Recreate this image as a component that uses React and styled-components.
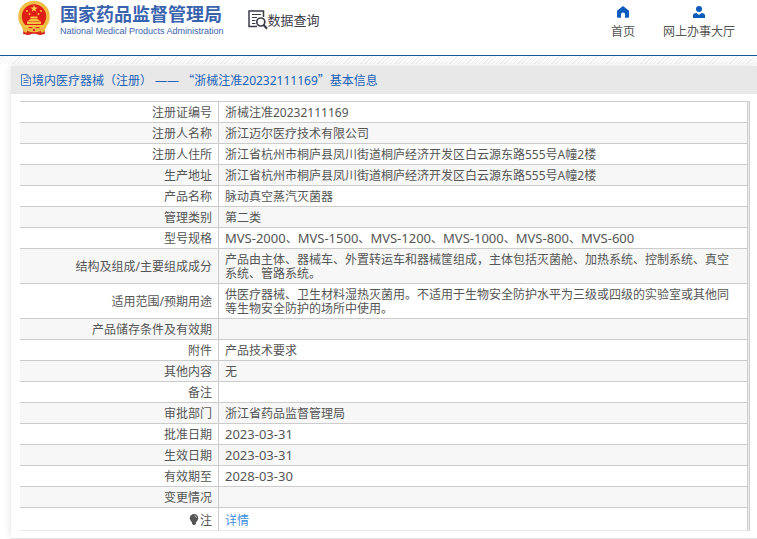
import React from 'react';
import styled, { createGlobalStyle } from 'styled-components';

const rows = [
    { label: '注册证编号', value: '浙械注准20232111169' },
    { label: '注册人名称', value: '浙江迈尔医疗技术有限公司' },
    { label: '注册人住所', value: '浙江省杭州市桐庐县凤川街道桐庐经济开发区白云源东路555号A幢2楼' },
    { label: '生产地址', value: '浙江省杭州市桐庐县凤川街道桐庐经济开发区白云源东路555号A幢2楼' },
    { label: '产品名称', value: '脉动真空蒸汽灭菌器' },
    { label: '管理类别', value: '第二类' },
    { label: '型号规格', codes: ['MVS-2000', 'MVS-1500', 'MVS-1200', 'MVS-1000', 'MVS-800', 'MVS-600'] },
    { label: '结构及组成/主要组成成分', value: '产品由主体、器械车、外置转运车和器械筐组成，主体包括灭菌舱、加热系统、控制系统、真空系统、管路系统。' },
    { label: '适用范围/预期用途', value: '供医疗器械、卫生材料湿热灭菌用。不适用于生物安全防护水平为三级或四级的实验室或其他同等生物安全防护的场所中使用。' },
    { label: '产品储存条件及有效期', value: '' },
    { label: '附件', value: '产品技术要求' },
    { label: '其他内容', value: '无' },
    { label: '备注', value: '' },
    { label: '审批部门', value: '浙江省药品监督管理局' },
    { label: '批准日期', codes: ['2023-03-31'] },
    { label: '生效日期', codes: ['2023-03-31'] },
    { label: '有效期至', codes: ['2028-03-30'] },
    { label: '变更情况', value: '' },
];

export default function App() {
    return (
        <>
            <GlobalStyle />
            <Header>
                <Brand>
                    <Emblem />
                    <BrandText>
                        <BrandName>国家药品监督管理局</BrandName>
                        <BrandSub>National Medical Products Administration</BrandSub>
                    </BrandText>
                </Brand>
                <Section>
                    <SearchDocIcon />
                    数据查询
                </Section>
                <Nav>
                    <NavLink href="#home">
                        <HomeIcon />
                        首页
                    </NavLink>
                    <NavLink href="#service">
                        <UserIcon />
                        网上办事大厅
                    </NavLink>
                </Nav>
            </Header>
            <Main>
                <Panel>
                    <PanelTitle>
                        <DocIcon />
                        <span>
                            境内医疗器械（注册） —— <Quote>“</Quote>浙械注准20232111169<Quote>”</Quote>基本信息
                        </span>
                    </PanelTitle>
                    <TableWrap>
                        <Table>
                            <tbody>
                                {rows.map((row) => (
                                    <Row key={row.label}>
                                        <Label scope="row">{row.label}</Label>
                                        <Value>{row.codes ? <Codes items={row.codes} /> : row.value}</Value>
                                    </Row>
                                ))}
                                <Row $last>
                                    <Label scope="row"><BulbIcon />注</Label>
                                    <Value><DetailLink href="#detail">详情</DetailLink></Value>
                                </Row>
                            </tbody>
                        </Table>
                    </TableWrap>
                </Panel>
            </Main>
        </>
    );
}

function Codes({ items }) {
    return items.map((item, i) => (
        <React.Fragment key={item}>
            {i > 0 && '、'}
            <Code>{item}</Code>
        </React.Fragment>
    ));
}

function Emblem() {
    return (
        <svg width="34" height="36" viewBox="0 0 34 36" aria-hidden="true">
            <path d="M7 26h20l1 8-6 1-5-2-5 2-6-1z" fill="#d8281c" />
            <circle cx="17" cy="16.500" r="14" fill="#df1f16" stroke="#f0bd45" strokeWidth="3.600" />
            <path d="M17 5l1 2.600h2.700l-2.200 1.600.9 2.600-2.400-1.600-2.400 1.600.9-2.600-2.200-1.600H16z" fill="#ffd44d" />
            <g fill="#f9c440">
                <circle cx="10" cy="11" r="1" />
                <circle cx="12.500" cy="14" r="1" />
                <circle cx="21.500" cy="14" r="1" />
                <circle cx="24" cy="11" r="1" />
                <path d="M13 18l1-1.500h6l1 1.500zM13.500 18.500h7V20h-7zM11 21l1.500-1.500h9L23 21zM10 21.500h14V24H10zM7 25h20v2H7z" />
            </g>
            <path d="M4 25c3 3 7 4 9 4l-2 4-4-1zM30 25c-3 3-7 4-9 4l2 4 4-1z" fill="#edb93f" />
            <circle cx="17" cy="30" r="3" fill="#f0bd45" />
            <circle cx="17" cy="30" r="1.200" fill="#d8281c" />
            <path d="M11 31l-1 4M23 31l1 4M14 33h6" stroke="#d8281c" strokeWidth="1.500" />
        </svg>
    );
}

function SearchDocIcon() {
    return (
        <svg width="20" height="20" viewBox="0 0 20 20" fill="none" stroke="#3d3d49" aria-hidden="true">
            <path d="M15.500 7V1H1v15.500h8" strokeWidth="1.500" />
            <path d="M4 4.500h9M4 7.500h5M4 10.500h3.500M4 13.500h3.500" strokeWidth="1.100" />
            <circle cx="12.800" cy="12" r="4" strokeWidth="1.700" />
            <path d="M15.700 15l3.300 3.800" strokeWidth="2.200" />
        </svg>
    );
}

function HomeIcon() {
    return (
        <svg width="14" height="12" viewBox="0 0 14 12" fill="#0d5bbd" aria-hidden="true">
            <path d="M7 0l6 4.800V11a.8.8 0 0 1-.8.800H9V8.500a2 2 0 0 0-4 0v3.300H1.800A.8.8 0 0 1 1 11V4.800z" />
        </svg>
    );
}

function UserIcon() {
    return (
        <svg width="14" height="12" viewBox="0 0 14 12" fill="#0d5bbd" aria-hidden="true">
            <circle cx="7" cy="3" r="3" />
            <path d="M1 12V9.500C1 7.800 2.600 7 4.500 7L7 9l2.500-2c1.900 0 3.500.8 3.500 2.500V12z" />
        </svg>
    );
}

function DocIcon() {
    return (
        <svg width="10" height="12" viewBox="0 0 10 12" fill="none" stroke="#4a7fc4" aria-hidden="true">
            <path d="M.5.5h5.500l3.500 3.500v7.500h-9zM6 .5V4h3.500M2.500 4.500h2M2.500 6.500h5M2.500 8.500h5" />
        </svg>
    );
}

function BulbIcon() {
    return (
        <svg width="10" height="11" viewBox="0 0 10 11" aria-hidden="true">
            <circle cx="5" cy="4.300" r="4.200" fill="#555" />
            <path d="M3 7.500h4v2L5.800 11H4.200L3 9.500z" fill="#555" />
            <path d="M5.500 1.800c1.200.2 1.900.9 2.100 2" stroke="#ddd" fill="none" strokeWidth=".8" />
        </svg>
    );
}

const GlobalStyle = createGlobalStyle`
  body {
    margin: 0;
    background-color: #fff;
    color: #555;
    font-family: "Noto Sans", "Noto Sans CJK SC", sans-serif;
    font-size: 12px;
    line-height: 14px;
  }
`;

const Header = styled.header`
  display: flex;
  align-items: flex-start;
  box-sizing: border-box;
  height: 56px;
  padding: 0 22px 0 17px;
  border-bottom: 1px solid #14589c;
  background-color: #fff;
`;

const Brand = styled.div`
  display: flex;
  gap: 9px;
`;

const BrandText = styled.div`
  display: flex;
  flex-direction: column;
  padding-top: 4px;
  color: #3a63ae;
  white-space: nowrap;
`;

const BrandName = styled.span`
  font-size: 18px;
  font-weight: 700;
  line-height: 21px;
`;

const BrandSub = styled.span`
  font-family: "Liberation Sans", sans-serif;
  font-size: 9px;
  line-height: 13px;
`;

const Section = styled.div`
  display: flex;
  align-items: center;
  margin-left: 24px;
  padding-top: 10px;
  color: #3d3d49;
  font-size: 13px;
  line-height: 18px;
  white-space: nowrap;
`;

const Nav = styled.nav`
  display: flex;
  gap: 28px;
  margin-left: auto;
  padding-top: 6px;
`;

const NavLink = styled.a`
  display: flex;
  flex-direction: column;
  align-items: center;
  gap: 7px;
  color: #555;
  text-decoration: none;
  white-space: nowrap;
`;

const Main = styled.main`
  padding: 10px 0 0 11px;
  background: repeating-linear-gradient(135deg, #fff 0 2px, #f0f0f0 2px 3px) top / 100% 8px no-repeat;
`;

const Panel = styled.section`
  padding-bottom: 7px;
  border-bottom: 1px solid #e3e3e3;
  background-color: #fff;
  box-shadow: 0 0 8px rgba(0, 0, 0, 0.12);
`;

const PanelTitle = styled.h1`
  display: flex;
  align-items: center;
  gap: 1px;
  height: 28px;
  margin: 0;
  padding: 0 10px;
  background-color: #e8e8e8;
  color: #2062b8;
  font-size: 12px;
  font-weight: 400;
`;

const Quote = styled.span`
  font-family: "Noto Sans CJK SC", sans-serif;
`;

const TableWrap = styled.div`
  margin: 7px 7px 0 9px;
  padding-right: 1px;
  border-top: 1px solid #ccc;
  border-right: 1px solid #ccc;
  background-color: #f0f0f0;
`;

const Table = styled.table`
  width: 100%;
  border-right: 1px solid #ccc;
  border-spacing: 0;
  table-layout: fixed;
  background-color: #fff;
`;

const Row = styled.tr`
  height: ${(props) => (props.$last ? '23px' : '21px')};

  &:nth-child(even) {
    background-color: #f7f7f7;
  }

  & > * {
    padding-top: ${(props) => (props.$last ? '6px' : '4px')};
    padding-bottom: 2px;
    border-bottom: 1px solid ${(props) => (props.$last ? '#e8e8e8' : '#ccc')};
  }
`;

const Label = styled.th`
  box-sizing: border-box;
  width: 199px;
  padding-left: 6px;
  padding-right: 6px;
  border-right: 1px solid #ccc;
  font-weight: 400;
  text-align: right;

  svg {
    margin-right: 1px;
    vertical-align: baseline;
  }
`;

const Value = styled.td`
  padding-left: 6px;
  padding-right: 12px;
`;

const Code = styled.span`
  font-size: 13px;
  line-height: 12px;
`;

const DetailLink = styled.a`
  color: #3c8fe0;
  text-decoration: none;
`;
